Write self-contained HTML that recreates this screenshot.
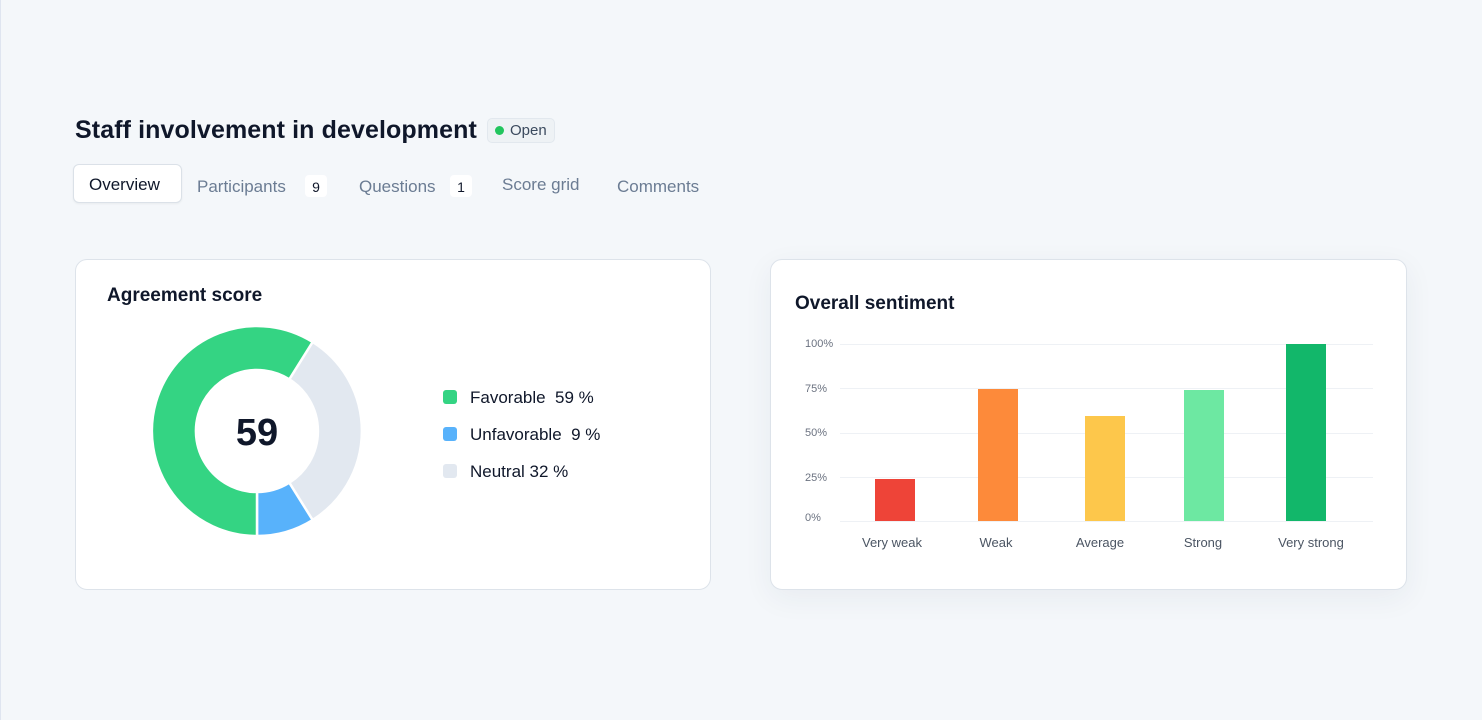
<!DOCTYPE html>
<html><head><style>
*{margin:0;padding:0;box-sizing:border-box}
body{width:1482px;height:720px;background:#f4f7fa;font-family:"Liberation Sans",sans-serif;position:relative;overflow:hidden;box-shadow:inset 1px 0 0 #dfe5f0}
.abs{position:absolute}
h1{position:absolute;left:75px;top:116px;font-size:25px;font-weight:600;color:#0f172a;letter-spacing:0.1px}
.badge{left:487px;top:118px;height:25px;width:68px;background:#eef2f5;border:1px solid #e2e8ee;border-radius:5px;font-size:15px;color:#3b4a5e;padding:3px 0 0 22px}
.badge:before{content:"";position:absolute;left:7px;top:7px;width:9px;height:9px;border-radius:50%;background:#22c55e}
.tab{font-size:17px;color:#6b7c93}
.ov{left:73px;top:164px;width:109px;height:39px;background:#fff;border:1px solid #dbe1e8;border-radius:6px;color:#0f172a;padding:10px 0 0 15px;box-shadow:0 1px 2px rgba(0,0,0,.05)}
.cnt{background:#fff;color:#0f172a;font-size:14px;border-radius:4px;width:22px;height:22px;text-align:center;padding-top:4px}
.card{background:#fff;border:1px solid #dde3ea;border-radius:12px}
.ct{font-size:19px;font-weight:600;color:#0f172a}
.lg{font-size:17px;color:#0f172a}
.sw{width:14px;height:14px;border-radius:3px}
.yl{font-size:11px;color:#6b7280}
.xl{font-size:13px;color:#4b5563;text-align:center;width:100px}
</style></head><body>
<h1>Staff involvement in development</h1>
<div class="abs badge">Open</div>
<div class="abs tab ov">Overview</div>
<div class="abs tab" style="left:197px;top:177px">Participants</div>
<div class="abs cnt" style="left:305px;top:175px">9</div>
<div class="abs tab" style="left:359px;top:177px">Questions</div>
<div class="abs cnt" style="left:450px;top:175px">1</div>
<div class="abs tab" style="left:502px;top:175px">Score grid</div>
<div class="abs tab" style="left:617px;top:177px">Comments</div>

<div class="abs card" style="left:75px;top:259px;width:636px;height:331px"></div>
<div class="abs ct" style="left:107px;top:285px">Agreement score</div>
<svg class="abs" style="left:0;top:0" width="760" height="600">
<g transform="translate(257,431)" stroke="#fff" stroke-width="2.5">
<path d="M55.6,-89.0 A105,105 0 0 1 55.6,89.0 L32.3,51.7 A61,61 0 0 0 32.3,-51.7Z" fill="#e2e8f0"/>
<path d="M55.6,89.0 A105,105 0 0 1 0,105 L0,61 A61,61 0 0 0 32.3,51.7Z" fill="#58b2fb"/>
<path d="M0,105 A105,105 0 1 1 55.6,-89.0 L32.3,-51.7 A61,61 0 1 0 0,61Z" fill="#34d483"/>
</g>
<text x="257" y="445" text-anchor="middle" font-family="Liberation Sans" font-size="38" font-weight="700" fill="#0f172a">59</text>
</svg>
<div class="abs sw" style="left:443px;top:390px;background:#34d483"></div>
<div class="abs lg" style="left:470px;top:388px">Favorable&nbsp; 59 %</div>
<div class="abs sw" style="left:443px;top:427px;background:#58b2fb"></div>
<div class="abs lg" style="left:470px;top:425px">Unfavorable&nbsp; 9 %</div>
<div class="abs sw" style="left:443px;top:464px;background:#e2e8f0"></div>
<div class="abs lg" style="left:470px;top:462px">Neutral 32 %</div>

<div class="abs card" style="left:770px;top:259px;width:637px;height:331px;box-shadow:0 8px 30px rgba(30,50,90,.06)"></div>
<div class="abs ct" style="left:795px;top:293px">Overall sentiment</div>
<div class="abs yl" style="left:805px;top:338px">100%</div>
<div class="abs yl" style="left:805px;top:383px">75%</div>
<div class="abs yl" style="left:805px;top:427px">50%</div>
<div class="abs yl" style="left:805px;top:472px">25%</div>
<div class="abs yl" style="left:805px;top:512px">0%</div>
<svg class="abs" style="left:830px;top:330px" width="560" height="200">
<g stroke="#eef1f5" stroke-width="1">
<line x1="10" y1="14.5" x2="543" y2="14.5"/><line x1="10" y1="58.5" x2="543" y2="58.5"/><line x1="10" y1="103.5" x2="543" y2="103.5"/><line x1="10" y1="147.5" x2="543" y2="147.5"/><line x1="10" y1="191.5" x2="543" y2="191.5"/>
</g>
<rect x="45" y="149" width="40" height="42" fill="#ee4438"/>
<rect x="148" y="59" width="40" height="132" fill="#fd8a3a"/>
<rect x="255" y="86" width="40" height="105" fill="#fdc74b"/>
<rect x="354" y="60" width="40" height="131" fill="#6de8a2"/>
<rect x="456" y="14" width="40" height="177" fill="#12b76a"/>
</svg>
<div class="abs xl" style="left:842px;top:535px">Very weak</div>
<div class="abs xl" style="left:946px;top:535px">Weak</div>
<div class="abs xl" style="left:1050px;top:535px">Average</div>
<div class="abs xl" style="left:1153px;top:535px">Strong</div>
<div class="abs xl" style="left:1261px;top:535px">Very strong</div>
</body></html>
